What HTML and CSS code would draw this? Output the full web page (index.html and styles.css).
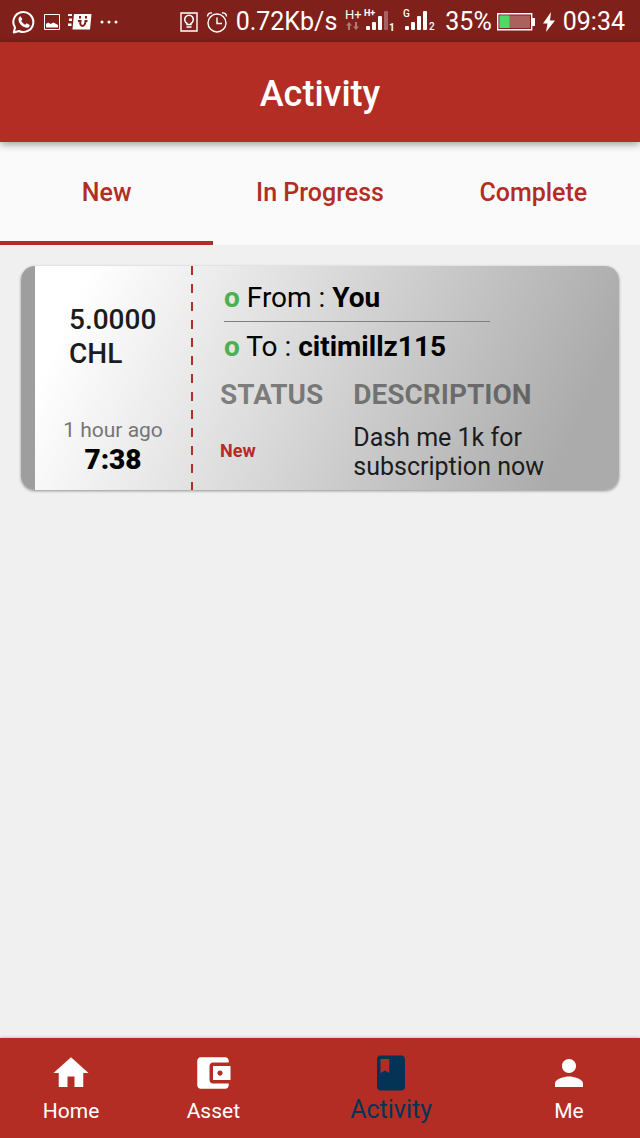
FILE: index.html
```html
<!DOCTYPE html>
<html lang="en">
<head>
    <meta charset="UTF-8">
    <meta name="viewport" content="width=device-width, initial-scale=1.0">
    <title>Activity</title>
    <link rel="stylesheet" href="styles.css">
</head>
<body>
    <!-- Status bar -->
    <div class="status-bar">
        <div class="status-group">
            <svg width="24" height="24" viewBox="0 0 24 24" fill="none" stroke="#fff" stroke-width="2">
                <path d="M3 17.500A10 10 0 1 1 7 21L1.800 22.500Z" stroke-linejoin="round"/>
                <path d="M8.500 6.200l1.900 3.100-1.200 1.500c.9 1.900 2.200 3.100 4 3.900l1.500-1.400 3 1.600c.1 2-1.500 3-3.200 2.800-4.200-.5-7.700-4.100-8-8.200-.1-1.500.8-2.900 2-3.300z" fill="#fff" stroke="none"/>
            </svg>
            <svg width="16" height="16" viewBox="0 0 16 16" fill="none" stroke="#fff">
                <path d="M.5.5h15v15H.5z"/>
                <path d="M2 13.500V10l2-1.500L6.500 10l3-1.500L14 11v2.500z" fill="#fff" stroke="none"/>
            </svg>
            <svg width="24" height="16" viewBox="0 0 24 16">
                <path d="M0 0h4v2H0zM1 4.500h3v2.500H1zM0 9.500h3.500V12H0z" fill="#fff"/>
                <path d="M6 0h17.500L22 15.500H4.500z" fill="#fff"/>
                <path d="M12 2v2.500M18 2v2.500M10 7h2.500c-1.500 6.500 4.500 6.500 5 0h2" fill="none" stroke="#80201b" stroke-width="2"/>
            </svg>
            <svg width="18" height="4" viewBox="0 0 18 4" fill="#fff">
                <circle cx="2" cy="2" r="1.500"/>
                <circle cx="9" cy="2" r="1.500"/>
                <circle cx="16" cy="2" r="1.500"/>
            </svg>
        </div>
        <div class="status-group">
            <svg width="18" height="20" viewBox="0 0 18 20" fill="none" stroke="#fff">
                <path d="M1 1h16v18H1z" stroke-width="1.400"/>
                <path d="M7 12.500v-1.200a4.300 4.300 0 1 1 4 0v1.200zM6.500 15h5" stroke-width="1.500"/>
            </svg>
            <svg width="22" height="22" viewBox="0 0 22 22" fill="none" stroke="#fff" stroke-width="1.400">
                <circle cx="11" cy="12" r="9"/>
                <path d="M11 6.500V12.500h5M1.500 5.500C1.500 3 3.500 1.500 6 2M20.500 5.500C20.500 3 18.500 1.500 16 2"/>
            </svg>
            <span>0.72Kb/s</span>
            <svg class="signal" width="50" height="24" viewBox="0 0 50 24" fill="#fff">
                <text x="0" y="11" font-size="13">H+</text>
                <path d="M4 14l3 3.500H5V22H3v-4.500H1zM11 22l-3-3.500h2V14h2v4.500h2z" opacity=".4"/>
                <text x="19" y="8" font-size="9" font-weight="700">H+</text>
                <rect x="21" y="18" width="4" height="4" rx="1"/>
                <rect x="27" y="14" width="4" height="8" rx="1"/>
                <rect x="33" y="8" width="4" height="14" rx="1"/>
                <rect x="39" y="3" width="4" height="19" rx="1" opacity=".3"/>
                <text x="44" y="23" font-size="10" font-weight="700">1</text>
            </svg>
            <svg class="signal" width="34" height="24" viewBox="0 0 34 24" fill="#fff">
                <text x="0" y="9" font-size="10" font-weight="500">G</text>
                <rect x="2" y="18" width="4" height="4" rx="1"/>
                <rect x="8" y="14" width="4" height="8" rx="1"/>
                <rect x="14" y="8" width="4" height="14" rx="1"/>
                <rect x="20" y="3" width="4" height="19" rx="1"/>
                <text x="26" y="22" font-size="10" font-weight="500">2</text>
            </svg>
            <div class="battery">
                <span>35%</span>
                <svg width="38" height="18" viewBox="0 0 38 18">
                    <path d="M.700.700h34v16H.700z" fill="none" stroke="#fff" stroke-width="1.400"/>
                    <path d="M2.500 2.500h30.500V15H2.500z" fill="#a9625f"/>
                    <path d="M2.500 2.500h10V15h-10z" fill="#4cd964"/>
                    <path d="M35 5h3v8h-3z" fill="#fff"/>
                </svg>
            </div>
            <svg width="12" height="20" viewBox="0 0 12 20" fill="#fff">
                <path d="M8 0L0 11.500h4.500L3 20l9-11.500H7z"/>
            </svg>
            <span>09:34</span>
        </div>
    </div>

    <header class="app-bar">
        <h1>Activity</h1>
    </header>

    <nav class="tabs">
        <a href="#new" class="tab active">New</a>
        <a href="#progress" class="tab">In Progress</a>
        <a href="#complete" class="tab">Complete</a>
    </nav>

    <main class="content" id="new">
        <article class="card">
            <div class="amount-col">
                <p class="amount">5.0000 CHL</p>
                <p class="ago">1 hour ago</p>
                <p class="time">7:38</p>
            </div>
            <div class="dashes"></div>
            <div class="detail-col">
                <p class="party from"><b class="dot">o</b> From : <b>You</b></p>
                <p class="party"><b class="dot">o</b> To : <b>citimillz115</b></p>
                <table class="info">
                    <thead>
                        <tr>
                            <th>STATUS</th>
                            <th>DESCRIPTION</th>
                        </tr>
                    </thead>
                    <tbody>
                        <tr>
                            <td class="state">New</td>
                            <td>Dash me 1k for subscription now</td>
                        </tr>
                    </tbody>
                </table>
            </div>
        </article>
    </main>

    <!-- Bottom navigation -->
    <nav class="bottom-nav">
        <a href="#home" class="nav-item">
            <svg viewBox="0 0 24 24"><path d="M10 20v-6h4v6h5v-8h3L12 3 2 12h3v8z"/></svg>
            <span>Home</span>
        </a>
        <a href="#asset" class="nav-item">
            <svg viewBox="0 0 24 24"><path d="M21 18v1c0 1.100-.9 2-2 2H5c-1.110 0-2-.9-2-2V5c0-1.100.89-2 2-2h14c1.100 0 2 .9 2 2v1h-9c-1.110 0-2 .9-2 2v8c0 1.100.89 2 2 2h9zm-9-2h10V8H12v8zm4-2.500c-.83 0-1.500-.67-1.500-1.500s.67-1.500 1.500-1.500 1.500.67 1.500 1.500-.67 1.500-1.500 1.500z"/></svg>
            <span>Asset</span>
        </a>
        <a href="#activity" class="nav-item active">
            <svg viewBox="0 0 24 24"><path d="M18 2H6c-1.100 0-2 .9-2 2v16c0 1.100.9 2 2 2h12c1.100 0 2-.9 2-2V4c0-1.100-.9-2-2-2zM6 4h5v8l-2.500-1.500L6 12V4z"/></svg>
            <span>Activity</span>
        </a>
        <a href="#me" class="nav-item">
            <svg viewBox="0 0 24 24"><path d="M12 12c2.210 0 4-1.790 4-4s-1.790-4-4-4-4 1.790-4 4 1.790 4 4 4zm0 2c-2.670 0-8 1.340-8 4v2h16v-2c0-2.660-5.330-4-8-4z"/></svg>
            <span>Me</span>
        </a>
    </nav>
</body>
</html>
```
FILE: styles.css
```css
* {
    box-sizing: border-box;
}

body {
    margin: 0;
    min-height: 100vh;
    display: flex;
    flex-direction: column;
    font-family: Roboto, Arial, sans-serif;
    background-color: #f0f0f0;
    color: #000;
}

h1, p {
    margin: 0;
}

a {
    text-decoration: none;
}

svg {
    display: block;
    flex-shrink: 0;
}

/* Status bar */
.status-bar {
    display: flex;
    justify-content: space-between;
    align-items: center;
    height: 42px;
    padding: 2px 15px 0 12px;
    background-color: #80201b;
    color: #fff;
    font-size: 25px;
    line-height: 30px;
}

.status-group {
    display: flex;
    align-items: center;
    gap: 8px;
}

.battery {
    display: flex;
    align-items: center;
    gap: 5px;
}

.signal {
    margin-bottom: 4px;
}

/* App bar */
.app-bar {
    position: relative;
    display: flex;
    justify-content: center;
    align-items: center;
    height: 100px;
    padding-top: 3px;
    background-color: #b42d24;
    box-shadow: 0 2px 8px rgba(0, 0, 0, 0.4);
    color: #fff;
}

.app-bar h1 {
    font-size: 36px;
    font-weight: 500;
}

/* Tabs */
.tabs {
    display: flex;
    background-color: #fafafa;
}

.tab {
    flex: 1;
    padding: 36px 0 34px;
    border-bottom: 4px solid transparent;
    color: #b42d24;
    font-size: 25px;
    font-weight: 500;
    line-height: 29px;
    text-align: center;
}

.tab.active {
    border-bottom-color: #b42d24;
}

.content {
    flex: 1;
    padding: 21px;
}

/* Transaction card */
.card {
    display: flex;
    border-left: 14px solid #9e9e9e;
    border-radius: 14px;
    background: linear-gradient(114deg, #fff 10%, #ababab 90%);
    background-origin: border-box;
    box-shadow: 0 1px 3px rgba(0, 0, 0, 0.4);
}

.amount-col {
    width: 156px;
    padding-top: 37px;
    text-align: center;
}

.amount {
    padding: 0 32px 47px 34px;
    color: #1c1c1c;
    font-size: 28px;
    font-weight: 500;
    line-height: 34px;
    text-align: left;
}

.ago {
    color: #757575;
    font-size: 21px;
    line-height: 25px;
}

.time {
    font-size: 28px;
    font-weight: 900;
    line-height: 34px;
}

.dashes {
    width: 2px;
    background: repeating-linear-gradient(#b42d24 0 9px, transparent 9px 18px);
}

.detail-col {
    flex: 1;
    padding: 15px 56px 9px 27px;
}

.party {
    padding-left: 4px;
    font-size: 28px;
    line-height: 34px;
}

.from {
    width: 266px;
    margin: 0 0 8px 4px;
    padding: 0 0 6px;
    border-bottom: 1px solid #808080;
}

.dot {
    color: #4caf50;
}

.info {
    width: 100%;
    margin-top: 14px;
    border-collapse: collapse;
    text-align: left;
}

.info th {
    padding: 0 30px 11px 0;
    color: rgba(0, 0, 0, 0.45);
    font-size: 28px;
    line-height: 34px;
}

.info td {
    padding: 0;
    color: #1c1c1c;
    font-size: 25px;
    line-height: 29px;
}

.info .state {
    padding-bottom: 4px;
    color: #b42d24;
    font-size: 18px;
    font-weight: 700;
}

/* Bottom navigation */
.bottom-nav {
    display: flex;
    height: 100px;
    padding-top: 14px;
    background-color: #b42d24;
    box-shadow: 0 0 3px rgba(0, 0, 0, 0.3);
}

.nav-item {
    flex: 2;
    display: flex;
    flex-direction: column;
    align-items: center;
    gap: 5px;
    color: #fff;
    font-size: 21px;
    line-height: 25px;
}

.nav-item svg {
    width: 42px;
    height: 42px;
    fill: currentColor;
}

.nav-item.active {
    flex: 3;
    gap: 1px;
    color: #033455;
    font-size: 25px;
    line-height: 29px;
}
```
